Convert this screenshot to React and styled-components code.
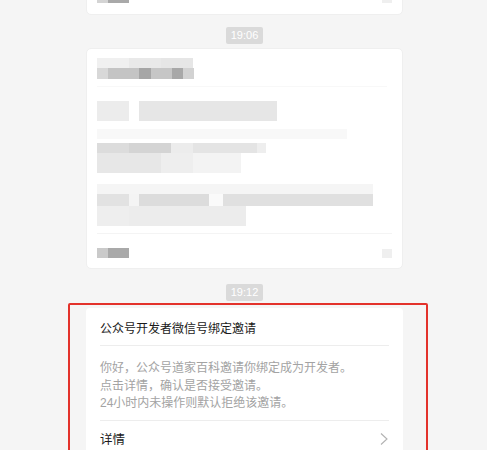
import React from "react";
import styled, { createGlobalStyle } from "styled-components";

const GlobalStyle = createGlobalStyle`
  html, body {
    margin: 0;
    padding: 0;
    background: #f5f5f5;
    overflow: hidden;
  }
  body {
    font-family: "Liberation Sans", "Noto Sans CJK SC", sans-serif;
  }
`;

// mosaic rows standing in for the blurred (pixelated) message
const blurredMain = [
  { mt: 0, h: 10, cells: [[32, "#f0f0f0"], [32, "#e9e9e9"], [32, "#e6e6e6"]] },
  {
    mt: 0,
    h: 11,
    cells: [[11, "#d8d8d8"], [31, "#c4c4c4"], [12, "#a6a6a6"], [21, "#c6c6c6"], [11, "#a8a8a8"], [11, "#d2d2d2"]],
  },
  { mt: 7, h: 1, cells: [[290, "#f8f8f8"]] },
  { mt: 14, h: 20, cells: [[32, "#ececec"], [10, "#ffffff"], [138, "#e6e6e6"]] },
  { mt: 8, h: 10, cells: [[250, "#f8f8f8"]] },
  { mt: 4, h: 10, cells: [[32, "#dcdcdc"], [42, "#d4d4d4"], [22, "#ececec"], [64, "#e4e4e4"], [9, "#eeeeee"]] },
  { mt: 0, h: 20, cells: [[64, "#e7e7e7"], [32, "#eeeeee"], [48, "#f3f3f3"]] },
  { mt: 11, h: 10, cells: [[276, "#f5f5f5"]] },
  { mt: 0, h: 12, cells: [[32, "#e2e2e2"], [10, "#f4f4f4"], [70, "#dcdcdc"], [14, "#fafafa"], [150, "#e0e0e0"]] },
  { mt: 0, h: 20, cells: [[32, "#eeeeee"], [117, "#ececec"]] },
];

const lines = [
  "你好，公众号道家百科邀请你绑定成为开发者。",
  "点击详情，确认是否接受邀请。",
  "24小时内未操作则默认拒绝该邀请。",
];

function Mosaic({ rows }) {
  return (
    <>
      {rows.map((row, i) => (
        <Strip key={i} $mt={row.mt} $h={row.h}>
          {row.cells.map(([w, c], j) => (
            <Cell key={j} $w={w} $c={c} />
          ))}
        </Strip>
      ))}
    </>
  );
}

function BlurredFooter({ light }) {
  return (
    <FooterRow>
      <Strip $mt={0} $h={10}>
        <Cell $w={11} $c={light} />
        <Cell $w={21} $c="#a9a9a9" />
      </Strip>
      <Stub />
    </FooterRow>
  );
}

function App() {
  return (
    <Page>
      <GlobalStyle />
      <Column>
        <Card $top>
          <BlurredFooter light="#d4d4d4" />
        </Card>

        <Time>19:06</Time>

        <Card>
          <Mosaic rows={blurredMain} />
          <CardLine />
          <BlurredFooter light="#cacaca" />
        </Card>

        <Time $last>19:12</Time>

        <Highlight>
          <Notice>
            <Title>公众号开发者微信号绑定邀请</Title>
            <Body>
              {lines.map((l) => (
                <div key={l}>{l}</div>
              ))}
            </Body>
            <Detail>
              <span>详情</span>
              <svg width="10" height="14" viewBox="0 0 10 14">
                <polyline points="2,1.5 8,7 2,12.5" fill="none" stroke="#b2b2b2" strokeWidth="1.1" />
              </svg>
            </Detail>
          </Notice>
        </Highlight>
      </Column>
    </Page>
  );
}

// style-component

const Page = styled.div`
  width: 487px;
  height: 450px;
  overflow: hidden;
  background: #f5f5f5;
`;
const Column = styled.div`
  width: 317px;
  margin-left: 86px;
  display: flex;
  flex-direction: column;
`;
const Card = styled.div`
  box-sizing: border-box;
  background: #ffffff;
  border: 1px solid #efefef;
  border-radius: 5px;
  padding: ${(p) => (p.$top ? "0 10px 11px" : "9px 10px 10px")};
  margin-top: ${(p) => (p.$top ? "-20px" : "0")};
  height: ${(p) => (p.$top ? "35px" : "221px")};
  display: flex;
  flex-direction: column;
`;
const Strip = styled.div`
  display: flex;
  height: ${(p) => p.$h}px;
  margin-top: ${(p) => p.$mt}px;
  flex-shrink: 0;
`;
const Cell = styled.div`
  width: ${(p) => p.$w}px;
  height: 100%;
  background: ${(p) => p.$c};
  flex-shrink: 0;
`;
const CardLine = styled.div`
  height: 1px;
  background: #f4f4f4;
  margin-top: 7px;
`;
const FooterRow = styled.div`
  display: flex;
  justify-content: space-between;
  align-items: center;
  margin-top: auto;
`;
const Stub = styled.div`
  width: 10px;
  height: 9px;
  background: #efefef;
`;
const Time = styled.div`
  align-self: center;
  margin: ${(p) => (p.$last ? "15px 0 2px" : "12px 0 4px")};
  padding: 0 5px;
  height: 17px;
  line-height: 17px;
  font-size: 11px;
  color: #ffffff;
  background: #dadada;
  border-radius: 2px;
`;
const Highlight = styled.div`
  box-sizing: border-box;
  width: 360px;
  margin-left: -18px;
  height: 160px;
  border: 2px solid #e3322b;
  border-radius: 2px;
  padding: 3px 0 0 16px;
`;
const Notice = styled.div`
  width: 317px;
  box-sizing: border-box;
  background: #ffffff;
  border-radius: 4px;
  padding: 12px 14px 0;
`;
const Title = styled.div`
  font-size: 12px;
  line-height: 18px;
  color: #1a1a1a;
  padding-bottom: 7px;
  border-bottom: 1px solid #ededed;
`;
const Body = styled.div`
  font-size: 12px;
  line-height: 17.5px;
  color: #a3a3a3;
  padding: 14px 0 7px;
  border-bottom: 1px solid #ededed;
`;
const Detail = styled.div`
  height: 36px;
  display: flex;
  align-items: center;
  justify-content: space-between;
  font-size: 12.5px;
  color: #1a1a1a;
`;

export default App;
